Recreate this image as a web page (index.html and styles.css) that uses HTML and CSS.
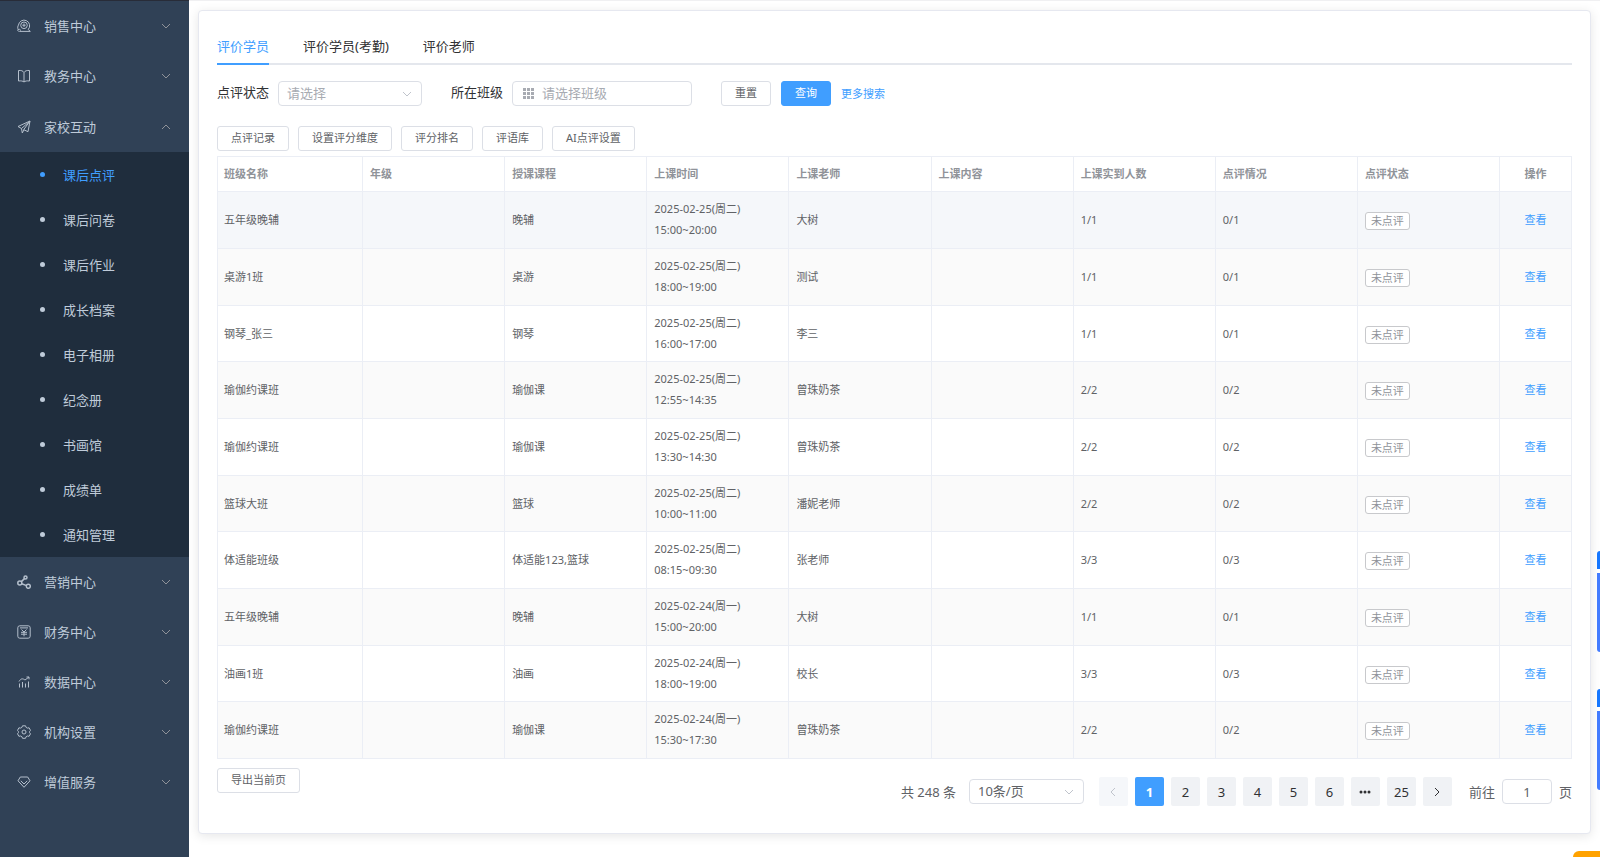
FILE: index.html
```html
<!DOCTYPE html>
<html lang="zh-CN">
<head>
<meta charset="utf-8">
<title>课后点评</title>
<link rel="stylesheet" href="styles.css">
</head>
<body>
<svg class="defs" aria-hidden="true">
  <symbol id="down" viewBox="0 0 12 12"><path d="M2 4l4 4 4-4"/></symbol>
  <symbol id="up" viewBox="0 0 12 12"><path d="M2 8l4-4 4 4"/></symbol>
</svg>
<div class="app">
  <nav class="sidebar">
    <ul class="menu">
      <li><button class="item"><svg class="icon" viewBox="0 0 14 14"><path d="M1.300 10.800C.3 9 .8 7 1.500 6a5.600 5.600 0 1 1 9.700 4.500L13.300 12.400H2.500c-2.300 0-2.300-2.200-.2-2.200L4 11.500"/><circle cx="7" cy="6.300" r="3.300"/><path d="M7 4.500v3.500M5.300 6.200h3.400"/></svg><span>销售中心</span><svg class="arrow"><use href="#down"/></svg></button></li>
      <li><button class="item"><svg class="icon" viewBox="0 0 14 14"><path d="M7 3.500C6 1.800 4 1.200 1.500 1.500v10.500C4 11.700 6 12 7 13c1-1 3-1.300 5.500-1V1.500C10 1.200 8 1.800 7 3.500zM7 3.500V13"/></svg><span>教务中心</span><svg class="arrow"><use href="#down"/></svg></button></li>
      <li class="open"><button class="item"><svg class="icon" viewBox="0 0 14 14"><path d="M1 6.500L13 1l-2 10.700-4.300-2L13 1 4.500 8.500zM4.500 8.500l.8 4.500L7 9.700"/></svg><span>家校互动</span><svg class="arrow"><use href="#up"/></svg></button>
        <ul class="submenu">
          <li><a class="active" href="#">课后点评</a></li>
          <li><a href="#">课后问卷</a></li>
          <li><a href="#">课后作业</a></li>
          <li><a href="#">成长档案</a></li>
          <li><a href="#">电子相册</a></li>
          <li><a href="#">纪念册</a></li>
          <li><a href="#">书画馆</a></li>
          <li><a href="#">成绩单</a></li>
          <li><a href="#">通知管理</a></li>
        </ul>
      </li>
      <li><button class="item"><svg class="icon bold" viewBox="0 0 14 14"><circle cx="2.800" cy="8" r="2"/><circle cx="8.500" cy="2.500" r="1.500"/><circle cx="11.300" cy="11.300" r="2"/><path d="M4.300 6.600l3.200-3M4.800 8.800l4.700 1.800"/></svg><span>营销中心</span><svg class="arrow"><use href="#down"/></svg></button></li>
      <li><button class="item"><svg class="icon" viewBox="0 0 14 14"><rect x=".8" y=".8" width="12.400" height="12.400" rx="2"/><path d="M3 2.900h8M4.500 4.500L7 7l2.500-2.500M4 7.300h6M4 9.200h6M7 7v4.300"/></svg><span>财务中心</span><svg class="arrow"><use href="#down"/></svg></button></li>
      <li><button class="item"><svg class="icon" viewBox="0 0 14 14"><path d="M2 6.500C4 3 6 3.500 8 5l4-3M9.500 2H12v2.300M2.500 8.500v4M5.500 7v5.500M8.500 8.500v4M11.500 6.500v6"/></svg><span>数据中心</span><svg class="arrow"><use href="#down"/></svg></button></li>
      <li><button class="item"><svg class="icon" viewBox="0 0 14 14"><path d="M5.500.8h3l.6 1.600 1.300.7 1.700-.3 1.400 2.600-1 1.300v.8l1 1.300-1.400 2.500-1.700-.3-1.300.7-.6 1.600h-3l-.6-1.600-1.300-.7-1.700.3L.5 8.800l1-1.300v-.8l-1-1.300 1.400-2.600 1.700.3 1.300-.7z"/><circle cx="7" cy="7" r="2"/></svg><span>机构设置</span><svg class="arrow"><use href="#down"/></svg></button></li>
      <li><button class="item"><svg class="icon" viewBox="0 0 14 14"><path d="M3.300 2h7.400L13 5.800 7 12.300 1 5.800zM3.800 5.800L7 9l3.200-3.200"/></svg><span>增值服务</span><svg class="arrow"><use href="#down"/></svg></button></li>
    </ul>
  </nav>
  <main class="main">
    <section class="card">
      <div class="tabs" role="tablist">
        <button class="tab active" role="tab" aria-selected="true">评价学员</button>
        <button class="tab" role="tab">评价学员(考勤)</button>
        <button class="tab" role="tab">评价老师</button>
      </div>
      <form class="filters">
        <div class="field"><label for="status">点评状态</label><span class="select status"><select id="status"><option>请选择</option></select><svg class="arrow"><use href="#down"/></svg></span></div>
        <div class="field"><label for="class">所在班级</label><span class="classbox"><svg class="grid" viewBox="0 0 11 11"><path d="M0 0h3v3H0zM4 0h3v3H4zM8 0h3v3H8zM0 4h3v3H0zM4 4h3v3H4zM8 4h3v3H8zM0 8h3v3H0zM4 8h3v3H4zM8 8h3v3H8z"/></svg><input id="class" type="text" placeholder="请选择班级"></span></div>
        <div class="buttons"><button type="button" class="btn">重置</button><button type="button" class="btn primary">查询</button><a class="link" href="#">更多搜索</a></div>
      </form>
      <div class="buttons toolbar">
        <button class="btn">点评记录</button><button class="btn">设置评分维度</button><button class="btn">评分排名</button><button class="btn">评语库</button><button class="btn">AI点评设置</button>
      </div>
      <table class="table">
        <colgroup><col class="c-name"><col><col><col><col><col><col><col><col><col class="c-op"></colgroup>
        <thead><tr><th>班级名称</th><th>年级</th><th>授课课程</th><th>上课时间</th><th>上课老师</th><th>上课内容</th><th>上课实到人数</th><th>点评情况</th><th>点评状态</th><th>操作</th></tr></thead>
        <tbody>
          <tr class="hover"><td>五年级晚辅</td><td></td><td>晚辅</td><td>2025-02-25(周二)<br>15:00~20:00</td><td>大树</td><td></td><td>1/1</td><td>0/1</td><td><span class="tag">未点评</span></td><td><a class="link" href="#">查看</a></td></tr>
          <tr><td>桌游1班</td><td></td><td>桌游</td><td>2025-02-25(周二)<br>18:00~19:00</td><td>测试</td><td></td><td>1/1</td><td>0/1</td><td><span class="tag">未点评</span></td><td><a class="link" href="#">查看</a></td></tr>
          <tr><td>钢琴_张三</td><td></td><td>钢琴</td><td>2025-02-25(周二)<br>16:00~17:00</td><td>李三</td><td></td><td>1/1</td><td>0/1</td><td><span class="tag">未点评</span></td><td><a class="link" href="#">查看</a></td></tr>
          <tr><td>瑜伽约课班</td><td></td><td>瑜伽课</td><td>2025-02-25(周二)<br>12:55~14:35</td><td>曾珠奶茶</td><td></td><td>2/2</td><td>0/2</td><td><span class="tag">未点评</span></td><td><a class="link" href="#">查看</a></td></tr>
          <tr><td>瑜伽约课班</td><td></td><td>瑜伽课</td><td>2025-02-25(周二)<br>13:30~14:30</td><td>曾珠奶茶</td><td></td><td>2/2</td><td>0/2</td><td><span class="tag">未点评</span></td><td><a class="link" href="#">查看</a></td></tr>
          <tr><td>篮球大班</td><td></td><td>篮球</td><td>2025-02-25(周二)<br>10:00~11:00</td><td>潘妮老师</td><td></td><td>2/2</td><td>0/2</td><td><span class="tag">未点评</span></td><td><a class="link" href="#">查看</a></td></tr>
          <tr><td>体适能班级</td><td></td><td>体适能123,篮球</td><td>2025-02-25(周二)<br>08:15~09:30</td><td>张老师</td><td></td><td>3/3</td><td>0/3</td><td><span class="tag">未点评</span></td><td><a class="link" href="#">查看</a></td></tr>
          <tr><td>五年级晚辅</td><td></td><td>晚辅</td><td>2025-02-24(周一)<br>15:00~20:00</td><td>大树</td><td></td><td>1/1</td><td>0/1</td><td><span class="tag">未点评</span></td><td><a class="link" href="#">查看</a></td></tr>
          <tr><td>油画1班</td><td></td><td>油画</td><td>2025-02-24(周一)<br>18:00~19:00</td><td>校长</td><td></td><td>3/3</td><td>0/3</td><td><span class="tag">未点评</span></td><td><a class="link" href="#">查看</a></td></tr>
          <tr><td>瑜伽约课班</td><td></td><td>瑜伽课</td><td>2025-02-24(周一)<br>15:30~17:30</td><td>曾珠奶茶</td><td></td><td>2/2</td><td>0/2</td><td><span class="tag">未点评</span></td><td><a class="link" href="#">查看</a></td></tr>
        </tbody>
      </table>
      <footer class="footer">
        <button class="btn">导出当前页</button>
        <div class="pagination">
          <span>共 248 条</span>
          <span class="select size"><select aria-label="每页条数"><option>10条/页</option></select><svg class="arrow"><use href="#down"/></svg></span>
          <div class="pages">
            <button class="page" disabled aria-label="上一页"><svg viewBox="0 0 12 12"><path d="M8 2L4 6l4 4"/></svg></button>
            <button class="page current">1</button><button class="page">2</button><button class="page">3</button><button class="page">4</button><button class="page">5</button><button class="page">6</button>
            <button class="page" aria-label="更多页"><svg class="dots" viewBox="0 0 12 12"><circle cx="2" cy="6" r="1.500"/><circle cx="6" cy="6" r="1.500"/><circle cx="10" cy="6" r="1.500"/></svg></button>
            <button class="page">25</button>
            <button class="page" aria-label="下一页"><svg viewBox="0 0 12 12"><path d="M4 2l4 4-4 4"/></svg></button>
          </div>
          <label class="jump">前往<input type="text" value="1">页</label>
        </div>
      </footer>
    </section>
  </main>
</div>
<div class="float first"></div>
<div class="float second"></div>
<div class="corner"></div>
</body>
</html>
```

FILE: styles.css
```css
* { box-sizing: border-box; }
body {
  margin: 0;
  background: #fff;
  color: #303133;
  font: 13px/20px "Noto Sans", "Noto Sans CJK SC", sans-serif;
  overflow: hidden;
}
button, input, select { font: inherit; color: inherit; margin: 0; }
button { cursor: pointer; }
a { text-decoration: none; }
ul { list-style: none; margin: 0; padding: 0; }
svg { fill: none; stroke: currentColor; }
.defs { display: none; }

.app { display: flex; min-height: 100vh; }
.sidebar {
  width: 189px;
  flex: none;
  background: #304156;
  border-top: 1px solid #282c38;
  color: #bfcbd9;
}
.item {
  display: flex;
  align-items: center;
  width: 100%;
  height: 50px;
  padding: 0 17px;
  border: 0;
  background: none;
}
.open .item { height: 51px; }
.item span { flex: 1; margin-left: 13px; text-align: left; }
.icon { width: 14px; height: 14px; color: #b4bfcc; }
.icon.bold { stroke-width: 1.5; }
.arrow { width: 12px; height: 12px; color: #909399; }
.submenu { background: #1f2d3d; }
.submenu a {
  display: flex;
  align-items: center;
  gap: 18px;
  height: 45px;
  padding: 0 0 0 40px;
  color: #bfcbd9;
}
.submenu a::before {
  content: "";
  width: 5px;
  height: 5px;
  border-radius: 50%;
  background: currentColor;
}
.submenu .active { color: #409eff; }

.main { flex: 1; min-width: 0; padding: 9px 9px 0; border-top: 1px solid #f0f0f2; }
.card {
  padding: 18px 18px 27px;
  border: 1px solid #e6e8f0;
  border-radius: 4px;
  background: #fff;
  box-shadow: 0 2px 11px rgba(0, 0, 0, .1);
}
.tabs { display: flex; gap: 34px; border-bottom: 2px solid #e4e7ed; }
.tab {
  height: 36px;
  margin-bottom: -2px;
  padding: 0;
  border: 0;
  border-bottom: 2px solid transparent;
  background: none;
}
.tab.active { color: #409eff; border-color: #409eff; }

.filters { display: flex; align-items: center; gap: 29px; margin-top: 16px; }
.field { display: flex; align-items: center; gap: 9px; }
.field label { padding-bottom: 3px; }
.select, .classbox {
  display: flex;
  align-items: center;
  height: 25px;
  border: 1px solid #dcdfe6;
  border-radius: 4px;
  background: #fff;
}
.select { position: relative; }
.select select {
  width: 100%;
  height: 100%;
  padding: 0 24px 1px 8px;
  border: 0;
  background: none;
  appearance: none;
}
.select .arrow { position: absolute; right: 8px; color: #c0c4cc; pointer-events: none; }
.status { width: 144px; color: #a8abb2; }
.classbox { width: 180px; padding: 0 10px; gap: 8px; }
.classbox input { min-width: 0; flex: 1; height: 100%; padding: 0 0 1px; border: 0; background: none; outline: 0; }
.classbox input::placeholder { color: #a8abb2; }
.grid { width: 11px; height: 11px; fill: #a8abb2; stroke: none; }

.buttons { display: flex; align-items: center; gap: 9px; }
.filters .buttons { gap: 10px; }
.toolbar { margin: 20px 0 5px; }
.btn {
  height: 25px;
  padding: 0 13px 1px;
  border: 1px solid #dcdfe6;
  border-radius: 3px;
  background: #fff;
  color: #606266;
  font-size: 11px;
  line-height: 20px;
}
.primary { border-color: #409eff; background: #409eff; color: #fff; }
.link { color: #409eff; font-size: 11px; }

.table {
  width: 100%;
  table-layout: fixed;
  border-collapse: collapse;
  color: #606266;
  font-size: 11px;
  line-height: 21px;
}
.c-name { width: 145px; }
.c-op { width: 72px; }
.table th, .table td { padding: 6px 7px 8px; border: 1px solid #ebeef5; text-align: left; }
.table th { height: 35px; padding: 0 7px 2px; color: #909399; font-weight: 700; }
.table th:last-child, .table td:last-child { text-align: center; }
.table th:first-child, .table td:first-child { padding-left: 6px; }
.table tbody tr:nth-child(3n) td { padding-bottom: 7px; }
.table tbody tr:nth-child(even) { background: #fafafa; }
.table .hover { background: #f5f7fa; }
.tag {
  display: inline-block;
  margin-top: 2px;
  padding: 0 5px;
  border: 1px solid #c8c9cc;
  border-radius: 3px;
  background: #fff;
  color: #909399;
  line-height: 16px;
  vertical-align: middle;
}

.footer { display: flex; justify-content: space-between; align-items: flex-start; margin-top: 9px; color: #606266; }
.pagination { display: flex; align-items: center; margin-top: 9px; }
.size { width: 115px; margin: 0 15px 0 13px; }
.pages { display: flex; gap: 7px; }
.page {
  display: grid;
  place-items: center;
  width: 29px;
  height: 29px;
  padding: 0;
  border: 0;
  border-radius: 2px;
  background: #f0f2f5;
  color: #303133;
}
.page svg { width: 12px; height: 12px; }
.page .dots { fill: currentColor; stroke: none; }
.page:disabled { background: #f5f7fa; color: #c0c4cc; }
.page.current { background: #409eff; color: #fff; font-weight: 700; }
.jump { display: flex; align-items: center; gap: 7px; margin-left: 17px; }
.jump input { width: 50px; height: 25px; padding: 0; border: 1px solid #dcdfe6; border-radius: 4px; text-align: center; }

.float {
  position: fixed;
  right: 0;
  width: 3px;
  height: 101px;
  border-radius: 6px 0 0 6px;
  background: linear-gradient(#1677ff 0 18px, #fff 18px 22px, #437cff 22px);
}
.first { bottom: 205px; }
.second { bottom: 67px; }
.corner { position: fixed; right: 0; bottom: 0; width: 27px; height: 6px; border-top-left-radius: 6px; background: #ffa200; }
```
